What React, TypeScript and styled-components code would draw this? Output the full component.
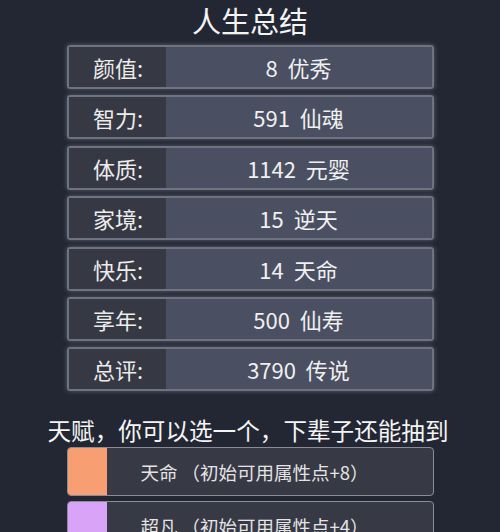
import styled, { createGlobalStyle } from 'styled-components';

const GlobalStyle = createGlobalStyle`
    html, body {
        margin: 0;
        padding: 0;
        background: #222733;
    }
    body {
        font-family: "Noto Sans CJK SC", "Noto Sans", sans-serif;
        color: #f2f2f2;
    }
`;

const Page = styled.div`
    width: 500px;
    height: 532px;
    overflow: hidden;
    display: flex;
    flex-direction: column;
    align-items: center;

    & > * {
        flex-shrink: 0;
    }
`;

const Title = styled.h1`
    margin: 0;
    height: 45px;
    line-height: 40px;
    font-size: 29px;
    font-weight: 400;
    color: #f4f4f4;
`;

const StatList = styled.div`
    width: 367px;
    display: flex;
    flex-direction: column;
    gap: 6.4px;
`;

const StatRow = styled.div`
    height: 44px;
    flex-shrink: 0;
    box-sizing: border-box;
    display: flex;
    border: 2px solid #6f7280;
    border-radius: 3px;
    box-shadow: 0 0 5px rgba(200, 205, 220, 0.35);
    overflow: hidden;
    font-size: 22px;
`;

const StatLabel = styled.div`
    width: 95px;
    padding-left: 2px;
    background: #363843;
    display: flex;
    align-items: center;
    justify-content: center;
    color: #ececec;
`;

const StatValue = styled.div`
    flex: 1;
    background: #4a4f62;
    display: flex;
    align-items: center;
    justify-content: center;
    white-space: pre;
    color: #f0f0f0;
`;

const TalentHeader = styled.div`
    margin-top: 23px;
    margin-right: 4px;
    height: 33px;
    line-height: 32px;
    font-size: 23.6px;
    color: #f4f4f4;
    white-space: nowrap;
`;

const TalentList = styled.div`
    width: 367px;
    display: flex;
    flex-direction: column;
    gap: 5px;
`;

const TalentItem = styled.div`
    position: relative;
    height: 49px;
    flex-shrink: 0;
    box-sizing: border-box;
    padding-left: 9px;
    border: 1px solid #8a8c96;
    border-radius: 4px;
    background: #373944;
    display: flex;
    align-items: center;
    justify-content: center;
    overflow: hidden;
    font-size: 18.5px;
    white-space: pre;
    color: #e4e4e4;
`;

const TalentSwatch = styled.div<{ $color: string }>`
    position: absolute;
    left: 0;
    top: 0;
    bottom: 0;
    width: 39px;
    background: ${(p) => p.$color};
`;

const stats = [
    ['颜值:', '8  优秀'],
    ['智力:', '591  仙魂'],
    ['体质:', '1142  元婴'],
    ['家境:', '15  逆天'],
    ['快乐:', '14  天命'],
    ['享年:', '500  仙寿'],
    ['总评:', '3790  传说'],
];

const talents = [
    { color: '#f79f72', text: '天命 （初始可用属性点+8）' },
    { color: '#d9a4f7', text: '超凡 （初始可用属性点+4）' },
];

function App() {
    return (
        <Page>
            <GlobalStyle />
            <Title>人生总结</Title>
            <StatList>
                {stats.map(([label, value]) => (
                    <StatRow key={label}>
                        <StatLabel>{label}</StatLabel>
                        <StatValue>{value}</StatValue>
                    </StatRow>
                ))}
            </StatList>
            <TalentHeader>天赋，你可以选一个，下辈子还能抽到</TalentHeader>
            <TalentList>
                {talents.map((t) => (
                    <TalentItem key={t.text}>
                        <TalentSwatch $color={t.color} />
                        {t.text}
                    </TalentItem>
                ))}
            </TalentList>
        </Page>
    );
}

export default App;
